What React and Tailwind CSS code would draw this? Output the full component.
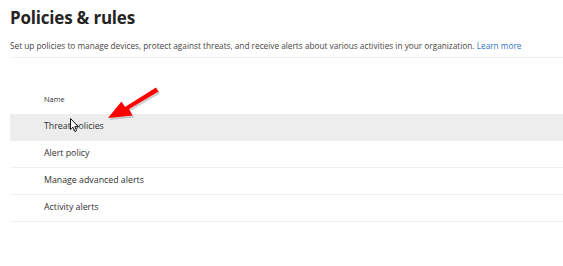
export default function App() {
  const rows = ['Threat policies', 'Alert policy', 'Manage advanced alerts', 'Activity alerts'];

  return (
    <div className="relative h-[266px] w-[563px] overflow-hidden bg-white pl-[10px] font-['Open_Sans',sans-serif] text-[#323130]">
      <h1 className="pt-[5px] text-[17px] font-bold leading-[26px] tracking-[-0.2px] text-[#252423]">Policies &amp; rules</h1>
      <p className="mt-[9px] text-[8.25px] leading-[12px] text-[#484644]">
        Set up policies to manage devices, protect against threats, and receive alerts about various activities in your organization.{' '}
        <span className="text-[#2f78c0]">Learn more</span>
      </p>
      <div className="mt-[5px] border-b border-[#f1f1f1]" />

      <div className="mt-[36px]">
        <div className="flex h-[20px] items-center pb-[8px] pl-[34px] text-[7.4px] font-medium text-[#323130]">Name</div>
        {rows.map((row, i) => (
          <div
            key={row}
            className={`flex h-[27px] items-center border-b pl-[34px] text-[8.8px] ${
              i === 0 ? 'border-transparent bg-[#ededed]' : 'border-[#f1f1f1]'
            }`}
          >
            {row}
          </div>
        ))}
      </div>

      {/* annotation arrow */}
      <svg className="absolute left-[100px] top-[82px]" width="72" height="44" viewBox="0 0 72 44">
        <g transform="translate(1.5,2)" fill="#9a9a9a" opacity="0.45">
          <path d="M56 5.5 L58.5 9.5 L29 27 L32.5 33.5 L8 36 L21.5 19.5 L25 25 Z" />
        </g>
        <path d="M56 5.5 L58.5 9.5 L29 27 L32.5 33.5 L8 36 L21.5 19.5 L25 25 Z" fill="#ff0000" />
      </svg>

      {/* mouse cursor */}
      <svg className="absolute left-[70px] top-[118px]" width="10" height="15" viewBox="0 0 10 15">
        <path d="M0.5 0.5 L0.5 11.5 L3 9.2 L4.8 13.5 L6.6 12.7 L4.9 8.6 L8.3 8.6 Z" fill="#fff" stroke="#000" strokeWidth="0.9" strokeLinejoin="round" />
      </svg>
    </div>
  );
}
